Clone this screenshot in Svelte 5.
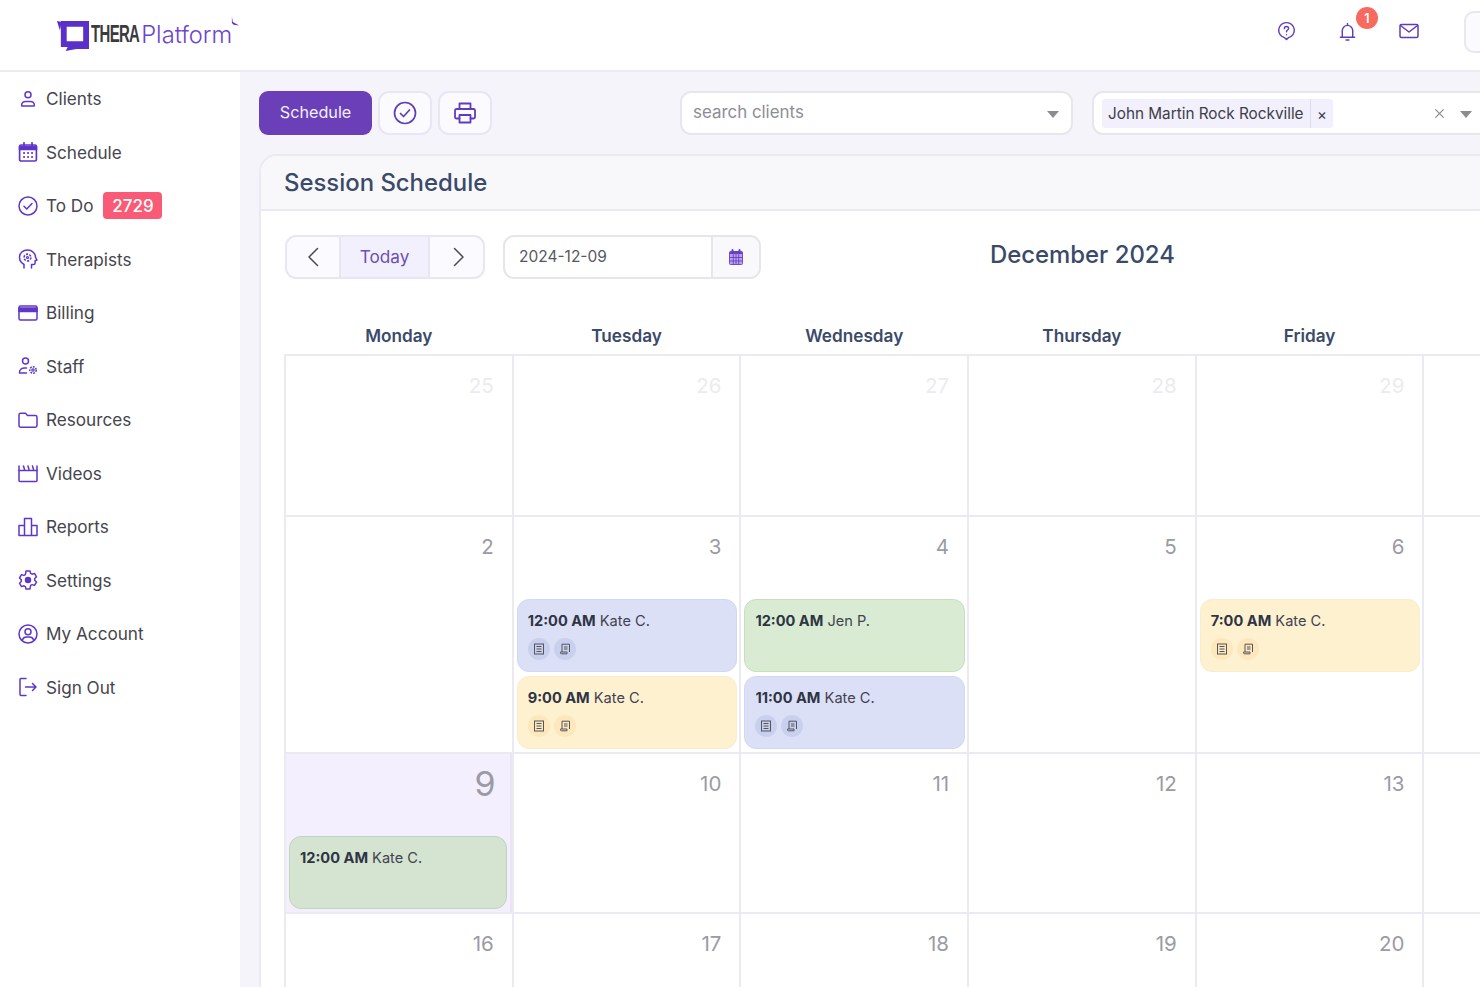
<script>
  const nav = [
    { label: 'Clients', icon: 'clients' }, { label: 'Schedule', icon: 'schedule' }, { label: 'To Do', icon: 'todo', badge: '2729' },
    { label: 'Therapists', icon: 'therapists' }, { label: 'Billing', icon: 'billing' }, { label: 'Staff', icon: 'staff' },
    { label: 'Resources', icon: 'resources' }, { label: 'Videos', icon: 'videos' }, { label: 'Reports', icon: 'reports' },
    { label: 'Settings', icon: 'settings' }, { label: 'My Account', icon: 'account' }, { label: 'Sign Out', icon: 'signout' }
  ];
  const days = ['Monday', 'Tuesday', 'Wednesday', 'Thursday', 'Friday', ''];
  const weeks = [
    { cls: 'w1', cells: [{ n: 25, muted: true }, { n: 26, muted: true }, { n: 27, muted: true }, { n: 28, muted: true }, { n: 29, muted: true }, {}] },
    { cls: 'w2', cells: [
      { n: 2 },
      { n: 3, ev: [{ t: '12:00 AM', p: 'Kate C.', c: 'blue', i: true }, { t: '9:00 AM', p: 'Kate C.', c: 'yellow', i: true }] },
      { n: 4, ev: [{ t: '12:00 AM', p: 'Jen P.', c: 'green' }, { t: '11:00 AM', p: 'Kate C.', c: 'blue', i: true }] },
      { n: 5 },
      { n: 6, ev: [{ t: '7:00 AM', p: 'Kate C.', c: 'yellow', i: true }] }, {}
    ] },
    { cls: 'w1', cells: [
      { n: 9, today: true, ev: [{ t: '12:00 AM', p: 'Kate C.', c: 'sage' }] },
      { n: 10 }, { n: 11 }, { n: 12 }, { n: 13 }, {}
    ] },
    { cls: 'w1', cells: [{ n: 16 }, { n: 17 }, { n: 18 }, { n: 19 }, { n: 20 }, {}] }
  ];
</script>

{#snippet navIcon(name)}
  <svg class="nav-icon" viewBox="0 0 20 20" fill="none" stroke="currentColor" stroke-width="1.5" stroke-linecap="round" stroke-linejoin="round">
    {#if name === 'clients'}
      <circle cx="10" cy="5.8" r="3" /><path d="M3.6 16.4c0-2.6 2-4 4-4h4.8c2 0 4 1.400 4 4 0 .5-.3.7-.7.7H4.300c-.4 0-.7-.2-.7-.7z" />
    {:else if name === 'schedule'}
      <rect x="1.600" y="3" width="16.800" height="16" rx="1.500" stroke-width="1.700" /><path d="M1.600 4.500h16.800v3H1.600z" fill="currentColor" stroke-width="1.700" /><path d="M6 .8v3.500M14 .8v3.500" stroke-width="1.700" /><path d="M6 11h.1M10 11h.1M14 11h.1M6 15h.1M10 15h.1M14 15h.1" stroke-width="2" />
    {:else if name === 'todo'}
      <circle cx="10" cy="10" r="9" /><path d="M6 10.300l2.800 2.700L14 7.500" />
    {:else if name === 'therapists'}
      <path d="M6 19v-3.500C3.500 14 1.500 11.500 1.500 8.500 1.500 4 5 1 9.500 1c4.800 0 8 3.500 8 7.300l1.500 2.700-1.900.8v2.200c0 1-.8 1.600-1.700 1.600H13.500V19" /><circle cx="9.500" cy="8.500" r="1" stroke-width="1.200" /><circle cx="9.500" cy="8.500" r="3.400" stroke-dasharray="2.200 1.300" stroke-width="1.600" stroke-linecap="butt" />
    {:else if name === 'billing'}
      <rect x="1" y="3" width="18" height="14" rx="1.500" /><path d="M1 5h18v3.500H1z" fill="currentColor" />
    {:else if name === 'staff'}
      <circle cx="7.500" cy="5" r="3" /><path d="M1.500 17h7M1.500 16.500c0-3 2.500-4.500 5-4.500h2" /><circle cx="15" cy="14" r="1.200" stroke-width="1.200" /><circle cx="15" cy="14" r="3.200" stroke-dasharray="1.800 1.100" stroke-width="1.600" stroke-linecap="butt" />
    {:else if name === 'resources'}
      <path d="M1 5c0-1 .7-1.700 1.700-1.700h4.800l2 2.200h7.800c1 0 1.700.7 1.700 1.700v8.300c0 1-.7 1.700-1.700 1.700H2.700c-1 0-1.700-.7-1.700-1.700z" />
    {:else if name === 'videos'}
      <path d="M1 7.500h18V17.500a1 1 0 0 1-1 1H2a1 1 0 0 1-1-1z" /><path d="M1 7.500V3M5.500 3l1 3.500M10 3l1 3.500M14.500 3l1 3.500M19 7.500V3" />
    {:else if name === 'reports'}
      <path d="M1 18.500V8.500h5.500v10M6.500 18.500V1.500h7v17M13.500 8.500H19v10H1" />
    {:else if name === 'settings'}
      <path d="M8 1h4l.6 2.400 1.500.8 2.400-.8 2 3.400-1.800 1.700v1.800l1.800 1.700-2 3.400-2.400-.8-1.500.8L12 19H8l-.6-2.400-1.500-.8-2.400.8-2-3.400 1.800-1.700V9.700L1.500 8l2-3.400 2.400.8 1.500-.8z" /><circle cx="10" cy="10" r="2.500" fill="currentColor" />
    {:else if name === 'account'}
      <circle cx="10" cy="10" r="9" /><circle cx="10" cy="7.800" r="3" /><path d="M4.300 16c.8-2 2.300-3 4-3h3.400c1.700 0 3.200 1 4 3" />
    {:else if name === 'signout'}
      <path d="M8 1.500H3a1 1 0 0 0-1 1v15a1 1 0 0 0 1 1h5M7.500 10H18M14.500 6.500L18 10l-3.500 3.500" />
    {/if}
  </svg>
{/snippet}

{#snippet chev(left)}
  <svg class="chev" viewBox="0 0 12 20" fill="none" stroke="#4b4b55" stroke-width="1.500" stroke-linecap="round" stroke-linejoin="round">
    <path d={left ? 'M10.500 1.500L2 10l8.500 8.500' : 'M1.500 1.500L10 10l-8.500 8.500'} />
  </svg>
{/snippet}

<div class="page">
  <header class="topbar">
    <div class="logo">
      <svg class="logo-mark" viewBox="0 0 36 34">
        <path d="M2 3l5 1-2 9z" fill="#5b2fc9" />
        <path fill-rule="evenodd" d="M6 3h29v29H22l-11 2 2-4H6zM12 9v15h17V9z" fill="#5b2fc9" />
      </svg>
      <span class="logo-thera">THERA</span><span class="logo-platform">Platform</span>
      <svg class="logo-spark" viewBox="0 0 10 12"><path d="M1 0l1 6 7 4-6-1-2-2z" fill="#5b2fc9" /></svg>
    </div>
    <div class="top-icons">
      <svg class="top-icon help" viewBox="0 0 20 20" fill="none" stroke="currentColor" stroke-width="1.500" stroke-linecap="round" stroke-linejoin="round">
        <path d="M10 1.200a8 8 0 0 1 2 15.800l-2 2-2-2A8 8 0 0 1 10 1.200z" /><path d="M7.800 7.500c0-1.300 1-2.200 2.200-2.200 1.300 0 2.200.9 2.200 2 0 1.700-2.200 1.700-2.200 3.500M10 13.800v.1" />
      </svg>
      <span class="bell-wrap">
        <svg class="top-icon" viewBox="0 0 20 20" fill="none" stroke="currentColor" stroke-width="1.500" stroke-linecap="round" stroke-linejoin="round">
          <path d="M4.500 15.500V8.500a5.500 5.500 0 0 1 11 0v7M2.500 15.500h15M8.500 18.500h3M10 1v2" />
        </svg>
        <span class="bell-badge">1</span>
      </span>
      <svg class="top-icon mail" viewBox="0 0 20 20" fill="none" stroke="currentColor" stroke-width="1.500" stroke-linecap="round" stroke-linejoin="round">
        <rect x="1" y="3.500" width="18" height="13" rx="1.500" /><path d="M1.500 4.500L10 11l8.500-6.500" />
      </svg>
      <div class="avatar-box"></div>
    </div>
  </header>

  <div class="body">
    <aside class="sidebar">
      {#each nav as item}
        <div class="nav-item">
          {@render navIcon(item.icon)}
          <span>{item.label}</span>
          {#if item.badge}<span class="nav-badge">{item.badge}</span>{/if}
        </div>
      {/each}
    </aside>

    <main class="main">
      <div class="toolbar">
        <button class="btn-primary">Schedule</button>
        <button class="btn-icon">
          <svg viewBox="0 0 24 24" fill="none" stroke="#5f3dba" stroke-width="1.700" stroke-linecap="round" stroke-linejoin="round"><circle cx="12" cy="12" r="10.500" /><path d="M7.500 12.500l3 3 6-6.500" /></svg>
        </button>
        <button class="btn-icon print">
          <svg viewBox="0 0 24 24" fill="none" stroke="#5f3dba" stroke-width="1.800" stroke-linecap="round" stroke-linejoin="round"><path d="M6.500 8V2.500h11V8M6.500 17.500H3.500A1.500 1.500 0 0 1 2 16v-6.500A1.500 1.500 0 0 1 3.500 8h17A1.500 1.500 0 0 1 22 9.500V16a1.500 1.500 0 0 1-1.500 1.500h-3" /><path d="M6.500 14h11v7.500h-11z" /></svg>
        </button>
        <div class="select search">
          <span class="placeholder">search clients</span>
          <span class="caret"></span>
        </div>
        <div class="select client">
          <span class="tag"><span class="tag-name">John Martin Rock Rockville</span><span class="tag-x">×</span></span>
          <svg class="clear" viewBox="0 0 12 12" fill="none" stroke="#8a8a90" stroke-width="1.300"><path d="M1.500 1.500l9 9M10.500 1.500l-9 9" /></svg>
          <span class="caret"></span>
        </div>
      </div>

      <section class="card">
        <div class="card-head"><h2>Session Schedule</h2></div>
        <div class="card-body">
          <div class="controls">
            <div class="nav-group">
              <button class="nav-btn prev">{@render chev(true)}</button>
              <button class="nav-btn today">Today</button>
              <button class="nav-btn next">{@render chev(false)}</button>
            </div>
            <div class="date-box">
              <span class="date-val">2024-12-09</span>
              <span class="date-ic">
                <svg viewBox="0 0 16 18"><path d="M1 5a2 2 0 0 1 2-2h10a2 2 0 0 1 2 2v1H1z" fill="#6a3fc9" /><rect x="3.500" y="1" width="2" height="3.500" rx="1" fill="#6a3fc9" /><rect x="10.500" y="1" width="2" height="3.500" rx="1" fill="#6a3fc9" /><path d="M1.500 6v9.500a1 1 0 0 0 1 1h11a1 1 0 0 0 1-1V6M5.300 6v10.500M8 6v10.500M10.700 6v10.500M1.500 9.500h13M1.500 13h13" fill="#b9a3ea" stroke="#6a3fc9" stroke-width=".9" /></svg>
              </span>
            </div>
            <h3 class="month">December 2024</h3>
          </div>

          <div class="cal-head">
            {#each days as d}<div class="cal-day">{d}</div>{/each}
          </div>
          <div class="cal-grid">
            {#each weeks as w}
              <div class="week {w.cls}">
                {#each w.cells as c}
                  <div class="cell" class:today={c.today}>
                    {#if c.n}<div class="num" class:muted={c.muted}>{c.n}</div>{/if}
                    {#if c.ev}
                      <div class="events">
                        {#each c.ev as e}
                          <div class="event {e.c}">
                            <div class="ev-text"><b>{e.t}</b> {e.p}</div>
                            {#if e.i}
                              <div class="ev-icons">
                                <span class="ev-ic"><svg viewBox="0 0 12 12" fill="none" stroke="#55555e" stroke-width="1"><rect x="1.500" y="1" width="9" height="10" /><path d="M3.500 3.500h5M3.500 6h5M3.500 8.500h5" /></svg></span>
                                <span class="ev-ic"><svg viewBox="0 0 12 12" fill="none" stroke="#55555e" stroke-width="1"><path d="M3 9V1.200h7.500V9M1.500 9h6.500v1.800H2.500a1 1 0 0 1-1-1z" /><path d="M5 4h3.500M5 6h3.500" /></svg></span>
                              </div>
                            {/if}
                          </div>
                        {/each}
                      </div>
                    {/if}
                  </div>
                {/each}
              </div>
            {/each}
          </div>
        </div>
      </section>
    </main>
  </div>
</div>

<style>
  :global(body) { margin: 0; background: #fff; overflow: hidden; }
  .page { width: 1480px; height: 987px; overflow: hidden; font-family: Inter, "Liberation Sans", sans-serif; color: #40404a; }
  .topbar { height: 70px; border-bottom: 2px solid #ebebf3; display: flex; align-items: center; justify-content: space-between; background: #fff; }
  .logo { display: flex; align-items: center; margin-left: 55px; position: relative; height: 34px; margin-top: -1px; }
  .logo-mark { width: 35px; height: 33px; }
  .logo-thera { font-family: "Liberation Sans", sans-serif; font-weight: 700; font-size: 23px; letter-spacing: -1px; color: #3a3a3f; transform: scaleX(.65); transform-origin: left center; margin-left: 1px; margin-right: -26px; }
  .logo-platform { font-size: 23.700px; color: #6b45cf; font-weight: 300; margin-left: 2px; }
  .logo-spark { position: absolute; right: -8px; top: -2px; width: 9px; height: 12px; }
  .top-icons { display: flex; align-items: center; height: 44px; margin-top: -6px; }
  .top-icon { width: 19px; height: 20px; color: #5f3dba; display: block; }
  .help { margin-right: 42px; transform: translateY(-1px); }
  .bell-wrap { position: relative; display: block; margin-right: 42px; }
  .mail { width: 20px; transform: translateY(-1px); }
  .bell-badge { position: absolute; top: -15px; left: 18px; width: 22px; height: 22px; border-radius: 50%; background: #f8695f; color: #fff; font-size: 12.500px; font-weight: 600; display: flex; align-items: center; justify-content: center; }
  .avatar-box { width: 40px; height: 42px; margin-left: 45px; margin-right: -24px; box-sizing: border-box; border: 2px solid #e9e6f3; border-radius: 10px; background: #fbfaff; }
  .body { display: flex; height: 915px; }
  .sidebar { width: 240px; flex: none; background: #fff; }
  .nav-item { height: 53.500px; display: flex; align-items: center; padding-left: 18px; font-size: 17.150px; color: #45454e; }
  .nav-icon { width: 20px; height: 20px; color: #5f36c9; margin-right: 8px; flex: none; }
  .nav-badge { margin-left: 10px; background: #f95a75; color: #fff; font-size: 17px; font-weight: 500; height: 27px; width: 59px; border-radius: 4px; display: flex; align-items: center; justify-content: center; }
  .main { flex: 1; min-width: 0; background: #f5f4fb; padding: 19px 0 0 19px; overflow: hidden; }
  .toolbar { display: flex; align-items: center; height: 44px; width: 1300px; }
  button { font-family: inherit; padding: 0; cursor: pointer; }
  .btn-primary { width: 113px; height: 44px; padding-bottom: 2px; background: #6a3fb8; color: #f4f0ff; border: none; border-radius: 9px; font-size: 16.200px; }
  .btn-icon { width: 54px; height: 44px; margin-left: 6px; background: #fbfaff; border: 2px solid #e9e5f5; border-radius: 11px; display: flex; align-items: center; justify-content: center; box-sizing: border-box; }
  .btn-icon svg { width: 24px; height: 24px; }
  .select { height: 44px; box-sizing: border-box; background: #fff; border: 2px solid #e7e6ec; border-radius: 11px; display: flex; align-items: center; position: relative; flex: none; }
  .search { width: 393px; margin-left: 188px; padding-left: 11px; padding-bottom: 2px; }
  .placeholder { color: #8d8d95; font-size: 16.900px; }
  .caret { position: absolute; right: 12px; top: 18px; width: 0; height: 0; border-left: 6.500px solid transparent; border-right: 6.500px solid transparent; border-top: 7px solid #8b8b90; }
  .client { width: 420px; margin-left: 19px; padding-left: 8px; }
  .client .caret { right: 38px; }
  .tag { display: flex; align-items: center; height: 29px; background: #f2f0fd; border-radius: 3px; font-size: 15.300px; color: #3e3e46; }
  .tag-name { padding: 0 6px; white-space: nowrap; }
  .tag-x { width: 23px; text-align: center; padding-left: 1px; border-left: 1px solid #dcdcf5; height: 29px; line-height: 31px; font-size: 15px; box-sizing: border-box; }
  .clear { position: absolute; left: 340px; top: 15px; width: 11px; height: 11px; }
  .card { margin-top: 19px; width: 1300px; height: 900px; background: #fff; border: 2px solid #ebeaf3; border-radius: 18px 0 0 0; border-right: none; box-sizing: border-box; }
  .card-head { height: 53px; background: #f8f8fb; border-bottom: 2px solid #ebeaf3; border-radius: 16px 0 0 0; display: flex; align-items: center; padding-left: 23px; }
  h2 { margin: 0; font-size: 23.900px; font-weight: 500; color: #3a4a68; }
  .card-body { padding: 24px 0 0 24px; }
  .controls { display: flex; align-items: flex-start; height: 44px; position: relative; }
  .nav-group { display: flex; width: 200px; height: 44px; box-sizing: border-box; border: 2px solid #e9e5f5; border-radius: 11px; background: #fbfaff; overflow: hidden; }
  .nav-btn { border: none; background: transparent; height: 100%; display: flex; align-items: center; justify-content: center; }
  .prev { width: 52px; flex: none; }
  .next { flex: 1; padding-left: 4px; }
  .chev { width: 12px; height: 20px; }
  .today { width: 91px; flex: none; background: #f3f0fd; border-left: 2px solid #e9e5f5; border-right: 2px solid #e9e5f5; color: #6b4fb5; font-size: 17.200px; padding-bottom: 2px; box-sizing: border-box; }
  .date-box { margin-left: 18px; width: 258px; height: 44px; box-sizing: border-box; border: 2px solid #e6e6e8; border-radius: 11px; display: flex; overflow: hidden; background: #fff; }
  .date-val { flex: 1; padding-left: 14px; line-height: 40px; font-size: 15.500px; color: #55595f; }
  .date-ic { width: 48px; background: #f9f8fb; border-left: 2px solid #e6e6e8; display: flex; align-items: center; justify-content: center; box-sizing: border-box; }
  .date-ic svg { width: 16px; height: 18px; }
  .month { position: absolute; left: 705px; top: -2px; margin: 0; font-size: 23.900px; font-weight: 500; color: #3a4a68; line-height: 44px; }
  .cal-head { display: flex; margin: 41px 0 0 0; height: 34px; }
  .cal-day { width: 227.700px; flex: none; text-align: center; font-size: 17.200px; font-weight: 600; color: #3a4a68; line-height: 32px; }
  .cal-grid { border-top: 2px solid #ebeaf3; width: 1400px; margin-left: -1px; }
  .week { display: flex; border-bottom: 2px solid #ebeaf3; box-sizing: border-box; }
  .w1 { height: 160.500px; }
  .w2 { height: 237px; }
  .cell { width: 227.700px; flex: none; box-sizing: border-box; border-left: 2px solid #ebeaf3; padding: 0 2px 0 3px; display: flex; flex-direction: column; background: #fff; }
  .cell.today { background: #f3effe; }
  .num { text-align: right; padding: 17px 16px 0 0; font-size: 20.500px; line-height: 26px; color: #9b9ba3; height: 44px; box-sizing: border-box; }
  .num.muted { color: #ecebef; }
  .today .num { font-size: 34px; padding: 17px 12px 0 0; }
  .events { display: flex; flex-direction: column; gap: 4px; margin-top: 38px; padding-right: .5px; }
  .event { height: 73px; box-sizing: border-box; border-radius: 12px; padding: 11px 10px 0; font-size: 14.600px; color: #434350; border: 1px solid transparent; }
  .ev-text { line-height: 20px; white-space: nowrap; }
  .ev-text b { font-weight: 700; color: #2e3444; }
  .blue { background: #dce0f6; border-color: #d3d8f2; }
  .yellow { background: #fef1d0; border-color: #fbeccb; }
  .green { background: #d9ecd3; border-color: #c4e0bd; }
  .sage { background: #d4e4d0; border-color: #bfd6bb; }
  .ev-icons { display: flex; gap: 4px; margin-top: 7px; }
  .ev-ic { width: 22px; height: 22px; border-radius: 50%; display: flex; align-items: center; justify-content: center; }
  .blue .ev-ic { background: #c9d0ee; }
  .yellow .ev-ic { background: #fde7bc; }
  .ev-ic svg { width: 12px; height: 12px; }
</style>
